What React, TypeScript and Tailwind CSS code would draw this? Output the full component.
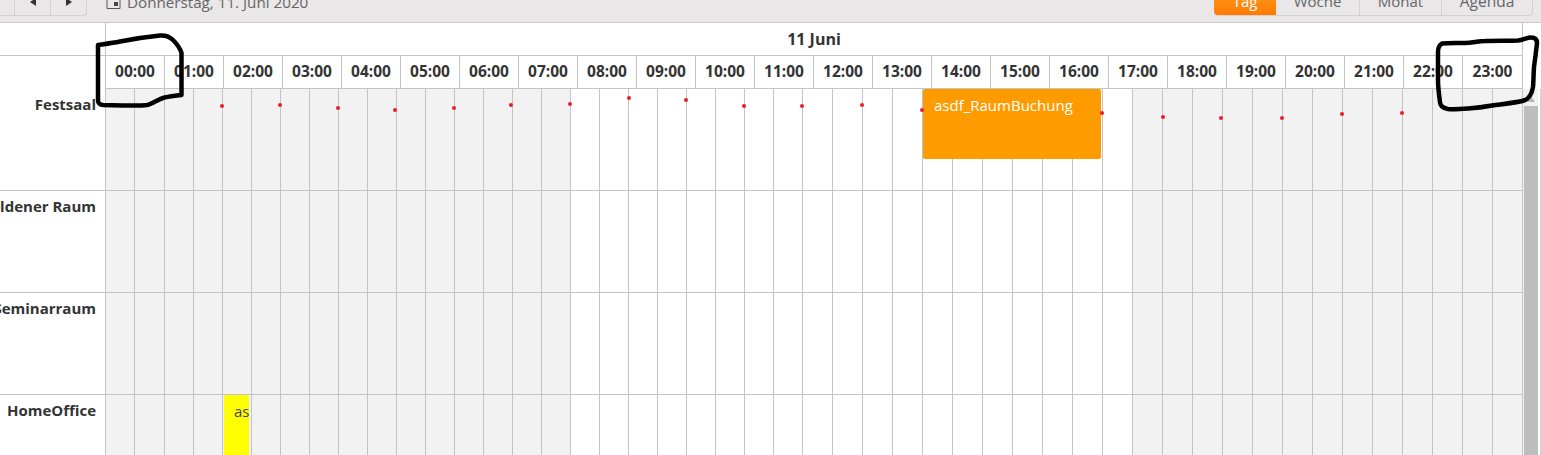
const hours = Array.from({ length: 24 }, (_, i) => `${String(i).padStart(2, "0")}:00`);
const slots = Array.from({ length: 48 }, (_, i) => i);

const rooms = [
  { name: "Festsaal", height: "h-[102px]" },
  { name: "Goldener Raum", height: "h-[102px]" },
  { name: "Seminarraum", height: "h-[102px]" },
  { name: "HomeOffice", height: "flex-1" },
];

const dots = [
  [222, 106], [280, 105], [338, 108], [395, 110], [454, 108], [511, 105], [570, 104],
  [629, 98], [686, 100], [744, 106], [802, 106], [862, 105], [922, 110], [1102, 113],
  [1163, 117], [1221, 118], [1282, 118], [1342, 114], [1402, 113],
];

function Toolbar() {
  return (
    <div className="flex h-[23px] shrink-0 items-end justify-between overflow-hidden border-b border-[#c9c7c8] bg-[#e9e7e8] pb-[6px] pr-[8px] text-[15px] text-[#666]">
      <div className="flex items-end">
        <div className="flex h-[28px] items-center rounded-br-[4px] border-b border-r border-[#d3d1d2] text-[#333]">
          <div className="h-full w-[15px] border-r border-[#d3d1d2]" />
          <div className="flex h-full w-[36px] items-center justify-center border-r border-[#d3d1d2]">
            <svg width="6" height="8" viewBox="0 0 6 8"><path d="M6 0v8L0 4z" fill="#333" /></svg>
          </div>
          <div className="flex h-full w-[35px] items-center justify-center">
            <svg width="6" height="8" viewBox="0 0 6 8"><path d="M0 0v8l6-4z" fill="#333" /></svg>
          </div>
        </div>
        <div className="ml-[19px] flex h-[28px] items-center gap-[6px] whitespace-nowrap text-[15.2px]">
          <svg className="relative top-[-1px]" width="15" height="15" viewBox="0 0 15 15">
            <path d="M1 .5h13v14H1z" fill="none" stroke="#555" />
            <path d="M8 8h4v4H8z" fill="#444" />
            <path d="M1 0h13v4H1z" fill="#555" />
          </svg>
          <span>Donnerstag, 11. Juni 2020</span>
        </div>
      </div>
      <div className="flex h-[28px] rounded-b-[4px] border-b border-r border-[#d3d1d2] text-center">
        <div className="flex w-[62px] items-center justify-center rounded-bl-[4px] bg-gradient-to-b from-[#ff9d1e] to-[#ff7a00] text-white">Tag</div>
        <div className="flex w-[84px] items-center justify-center border-r border-[#d3d1d2]">Woche</div>
        <div className="flex w-[82px] items-center justify-center border-r border-[#d3d1d2]">Monat</div>
        <div className="flex w-[90px] items-center justify-center text-[15.5px]">Agenda</div>
      </div>
    </div>
  );
}

function Header() {
  return (
    <div className="flex shrink-0">
      <div className="w-[1523px] font-bold text-[#333]">
        <div className="flex h-[33px] border-b border-r border-[#c4c4c4]">
          <div className="w-[106px] shrink-0 border-r border-[#c4c4c4]" />
          <div className="flex flex-1 items-center justify-center pb-[1px] text-[16px]">11 Juni</div>
        </div>
        <div className="flex h-[33px] border-r border-[#c4c4c4]">
          <div className="w-[106px] shrink-0 border-r border-[#c4c4c4]" />
          <div className="grid flex-1 grid-cols-[repeat(24,1fr)] border-b border-[#c4c4c4] text-[15.5px]">
            {hours.map((h, i) => (
              <div key={h} className={`flex items-center justify-center ${i < 23 ? "border-r border-[#c4c4c4]" : ""}`}>
                {h}
              </div>
            ))}
          </div>
        </div>
      </div>
    </div>
  );
}

function RoomRow({ name, height }: { name: string; height: string }) {
  return (
    <div className={`flex ${height} border-b border-[#c4c4c4] last:border-b-0`}>
      <div className="flex w-[106px] shrink-0 justify-end overflow-hidden whitespace-nowrap border-r border-[#c4c4c4] pr-[9px] pt-[4px] text-[15px] font-bold text-[#333]">
        {name}
      </div>
      <div className="grid flex-1 grid-cols-[repeat(4,29.25px)_repeat(20,29px)_repeat(24,30px)]">
        {slots.map((s) => (
          <div key={s} className={`border-r border-[#c4c4c4] ${s >= 16 && s < 35 ? "bg-white" : "bg-[#f2f2f2]"}`} />
        ))}
      </div>
    </div>
  );
}

function Scrollbar() {
  return (
    <div className="flex flex-1 border-r border-[#d0d0d0]">
      <div className="flex w-[14px] flex-col bg-[#f2f2f2]">
        <div className="flex h-[17px] items-end justify-center pb-[4px]">
          <svg width="7" height="5" viewBox="0 0 7 5"><path d="M3.5 0L7 5H0z" fill="#b5b5b5" /></svg>
        </div>
        <div className="flex-1 bg-[#bdbdbd]" />
      </div>
    </div>
  );
}

export default function App() {
  return (
    <div className="relative flex h-[455px] w-full flex-col overflow-hidden bg-white font-['Open_Sans',sans-serif]">
      <Toolbar />
      <Header />
      <div className="flex min-h-0 flex-1">
        <div className="flex w-[1523px] flex-col">
          {rooms.map((r) => (
            <RoomRow key={r.name} name={r.name} height={r.height} />
          ))}
        </div>
        <div className="w-px bg-[#f2f2f2]" />
        <Scrollbar />
      </div>

      {/* bookings */}
      <div className="absolute left-[923px] top-[89px] h-[70px] w-[178px] rounded-[2px] bg-[#fd9b00] pl-[11px] pt-[5px] text-[15px] text-white">
        asdf_RaumBuchung
      </div>
      <div className="absolute left-[224px] top-[395px] h-[60px] w-[25px] overflow-hidden rounded-t-[2px] bg-[#ffff00] pl-[10px] pt-[5px] text-[15px] text-[#444]">
        as
      </div>

      {/* red dots */}
      {dots.map(([x, y]) => (
        <div
          key={x}
          className="absolute h-[4px] w-[4px] rounded-full bg-[#ee1c25]"
          style={{ left: x - 2, top: y - 2 }}
        />
      ))}

      {/* hand drawn markers */}
      <svg className="pointer-events-none absolute left-0 top-0" width="1541" height="455" fill="none" stroke="#000" strokeWidth="4.5" strokeLinejoin="round" strokeLinecap="round">
        <path d="M98 45C105 44 113 43 120 41.500C130 39.500 145 37 160 35.500C166 35 170 37 173 40C177 44 180 48 181.500 53L181.500 95C175 96 168 96.500 163 98C157 100 152 104 147 105C140 106 130 105.500 123 105.500L103 105C99 104.500 98 103 98 100Z" />
        <path d="M1442 43.500C1450 42.500 1458 43 1465 43C1472 43 1478 41 1485 41C1497 40.500 1508 41 1518 40.500C1523 40 1527 37.500 1531 37.500C1535 37.500 1537 39 1537 43C1536 52 1535 60 1534 67C1533.500 74 1533.500 82 1533 87C1532 93 1529 99 1524 100.500C1515 103 1503 104 1492 105.500C1484 107 1476 108 1468 108.500C1461 109 1454 109.500 1448 109C1443 108 1440 106 1440 102C1439 95 1438 88 1438 80L1438 52C1438 47 1439 45 1442 43.500Z" />
      </svg>
    </div>
  );
}
